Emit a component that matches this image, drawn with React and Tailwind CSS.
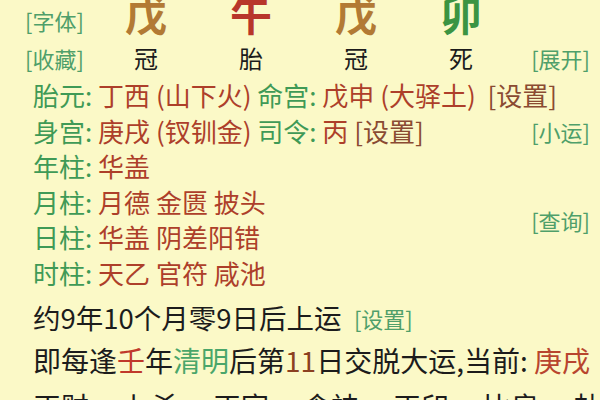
import React from "react";

const G = "text-[#3f9a56]";
const R = "text-[#ad3f2a]";
const B = "text-[#8a4b32]";
const LG = "text-[#4f9f6a]";

function TopRow() {
  const chars = [
    { c: "戊", cls: "text-[#b27a34]" },
    { c: "午", cls: "text-[#b8362a]" },
    { c: "戊", cls: "text-[#b27a34]" },
    { c: "卯", cls: "text-[#3b9442]" },
  ];
  return (
    <div className="flex h-[40px] items-center pl-[25px]">
      <span className={`w-[68.5px] text-[22px] leading-none ${LG}`}>[字体]</span>
      {chars.map((x, i) => (
        <span key={i} className={`w-[105px] text-center text-[42px] font-bold leading-none mt-[-14px] ${x.cls}`}>
          {x.c}
        </span>
      ))}
    </div>
  );
}

function SecondRow() {
  const chars = ["冠", "胎", "冠", "死"];
  return (
    <div className="flex h-[35px] items-center pl-[25px]">
      <span className={`w-[68.5px] text-[22px] leading-none ${LG}`}>[收藏]</span>
      {chars.map((c, i) => (
        <span key={i} className="w-[105px] text-center text-[24px] leading-none text-[#1c1c1c]">
          {c}
        </span>
      ))}
      <span className={`ml-auto pr-[10px] text-[22px] leading-none ${LG}`}>[展开]</span>
    </div>
  );
}

export default function App() {
  const gods = ["正财", "七杀", "正官", "食神", "正印", "比肩", "劫财"];
  return (
    <div className="w-[600px] h-[400px] overflow-hidden bg-[#fbf9c7] font-['Noto_Sans_CJK_SC',sans-serif]">
      <TopRow />
      <SecondRow />
      <div className="mt-[2.5px] flex h-[35.5px] items-center pl-[33px] text-[26px] leading-none whitespace-pre">
        <span className={G}>胎元: </span>
        <span className={R}>丁西 (山下火) </span>
        <span className={G}>命宫: </span>
        <span className={R}>戊申 (大驿土)  </span>
        <span className={B}>[设置]</span>
      </div>
      <div className="flex h-[35.5px] items-center pl-[33px] text-[26px] leading-none whitespace-pre">
        <span className={G}>身宫: </span>
        <span className={R}>庚戌 (钗钏金) </span>
        <span className={G}>司令: </span>
        <span className={R}>丙 </span>
        <span className={B}>[设置]</span>
        <span className={`ml-auto pr-[10px] text-[22px] ${LG}`}>[小运]</span>
      </div>
      <div className="flex">
        <div className="flex flex-col pl-[33px] text-[26px] leading-none whitespace-pre">
          <div className="flex h-[35.5px] items-center">
            <span className={G}>年柱: </span>
            <span className={R}>华盖</span>
          </div>
          <div className="flex h-[35.5px] items-center">
            <span className={G}>月柱: </span>
            <span className={R}>月德 金匮 披头</span>
          </div>
          <div className="flex h-[35.5px] items-center">
            <span className={G}>日柱: </span>
            <span className={R}>华盖 阴差阳错</span>
          </div>
          <div className="flex h-[35.5px] items-center">
            <span className={G}>时柱: </span>
            <span className={R}>天乙 官符 咸池</span>
          </div>
        </div>
        <div className="ml-auto flex items-center pr-[10px]">
          <span className={`text-[22px] leading-none ${LG}`}>[查询]</span>
        </div>
      </div>
      <div className="mt-[7px] flex h-[40px] items-center pl-[33px] text-[27.5px] leading-none whitespace-pre text-[#1c1c1c]">
        <span>约9年10个月零9日后上运  </span>
        <span className={`text-[22px] ${LG}`}>[设置]</span>
      </div>
      <div className="flex h-[44px] items-center pl-[33px] text-[28px] leading-none whitespace-pre text-[#1c1c1c]">
        <span>即每逢</span>
        <span className="text-[#c0392b]">壬</span>
        <span>年</span>
        <span className="text-[#4aa66a]">清明</span>
        <span>后第</span>
        <span className="text-[#8b4020]">11</span>
        <span>日交脱大运,当前: </span>
        <span className="text-[#b8452e]">庚戌</span>
      </div>
      <div className="mt-[10px] flex items-start gap-[34px] pl-[33px] text-[28px] leading-none whitespace-nowrap text-[#1c1c1c]">
        {gods.map((g, i) => (
          <span key={i} className="shrink-0">{g}</span>
        ))}
      </div>
    </div>
  );
}
